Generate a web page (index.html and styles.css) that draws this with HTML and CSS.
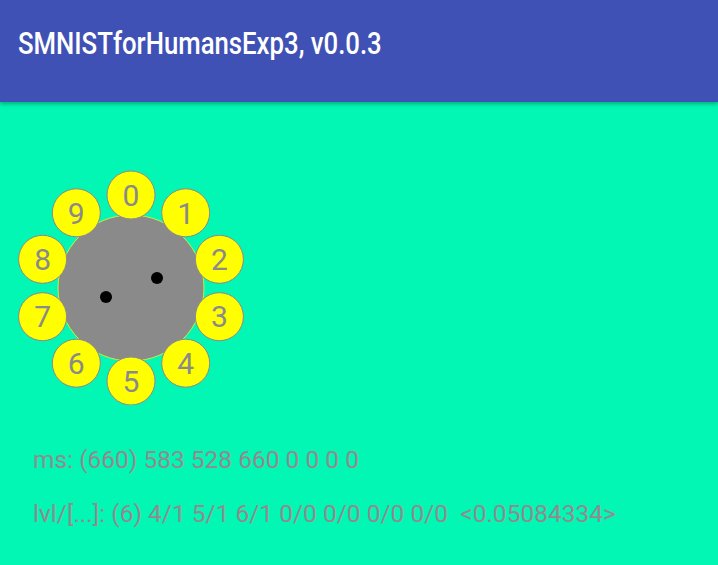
FILE: index.html
```html
<!DOCTYPE html>
<html>
<head>
<meta charset="utf-8">
<link rel="stylesheet" href="styles.css">
</head>
<body>
<header class="appbar"><span class="title">SMNISTforHumansExp3, v0.0.3</span></header>
<main class="content">
  <svg class="dial" width="260" height="240" viewBox="0 0 260 240">
    <circle cx="131" cy="123" r="73" class="core"/>
    <g class="keys">
      <circle cx="131" cy="30" r="24"/>
      <circle cx="185.7" cy="47.8" r="24"/>
      <circle cx="219.4" cy="94.3" r="24"/>
      <circle cx="219.4" cy="151.7" r="24"/>
      <circle cx="185.7" cy="198.2" r="24"/>
      <circle cx="131" cy="216" r="24"/>
      <circle cx="76.3" cy="198.2" r="24"/>
      <circle cx="42.6" cy="151.7" r="24"/>
      <circle cx="42.6" cy="94.3" r="24"/>
      <circle cx="76.3" cy="47.8" r="24"/>
    </g>
    <g class="digits">
      <text x="131" y="40.7">0</text>
      <text x="185.7" y="58.5">1</text>
      <text x="219.4" y="105">2</text>
      <text x="219.4" y="162.4">3</text>
      <text x="185.7" y="208.9">4</text>
      <text x="131" y="226.7">5</text>
      <text x="76.3" y="208.9">6</text>
      <text x="42.6" y="162.4">7</text>
      <text x="42.6" y="105">8</text>
      <text x="76.3" y="58.5">9</text>
    </g>
    <circle cx="157" cy="113" r="6" class="dot"/>
    <circle cx="106" cy="132" r="6" class="dot"/>
  </svg>
  <div class="stats">
    <div class="line">ms: (660) 583 528 660 0 0 0 0</div>
    <div class="line">lvl/[...]: (6) 4/1 5/1 6/1 0/0 0/0 0/0 0/0  &lt;0.05084334&gt;</div>
  </div>
</main>
</body>
</html>
```
FILE: styles.css
```css
html, body {
  margin: 0;
  padding: 0;
}
body {
  background: #03f7b4;
  font-family: Roboto, "Noto Sans", sans-serif;
  width: 718px;
  height: 565px;
  overflow: hidden;
}
.appbar {
  height: 102px;
  background: #3f51b5;
  box-shadow: 0 2px 4px rgba(0, 0, 0, 0.3);
  display: flex;
  align-items: flex-start;
  padding-left: 18px;
  position: relative;
}
.title {
  color: #ffffff;
  font-size: 31px;
  font-weight: 500;
  line-height: 36px;
  margin-top: 26px;
  display: inline-block;
  transform: scaleX(0.83);
  transform-origin: left center;
  white-space: nowrap;
}
.content {
  padding-top: 63px;
}
.dial {
  display: block;
}
.core {
  fill: #8a8a8a;
  stroke: #c6f03c;
  stroke-width: 1;
}
.keys circle {
  fill: #ffff00;
  stroke: #8a8a8a;
  stroke-width: 1;
}
.digits text {
  fill: #8a8a8a;
  font-family: Roboto, sans-serif;
  font-size: 30px;
  text-anchor: middle;
}
.dot {
  fill: #000000;
}
.stats {
  margin-top: 41px;
  padding-left: 33px;
  display: flex;
  flex-direction: column;
  gap: 26px;
}
.line {
  color: #938a8e;
  font-size: 24.5px;
  line-height: 28px;
  white-space: pre;
}
```
